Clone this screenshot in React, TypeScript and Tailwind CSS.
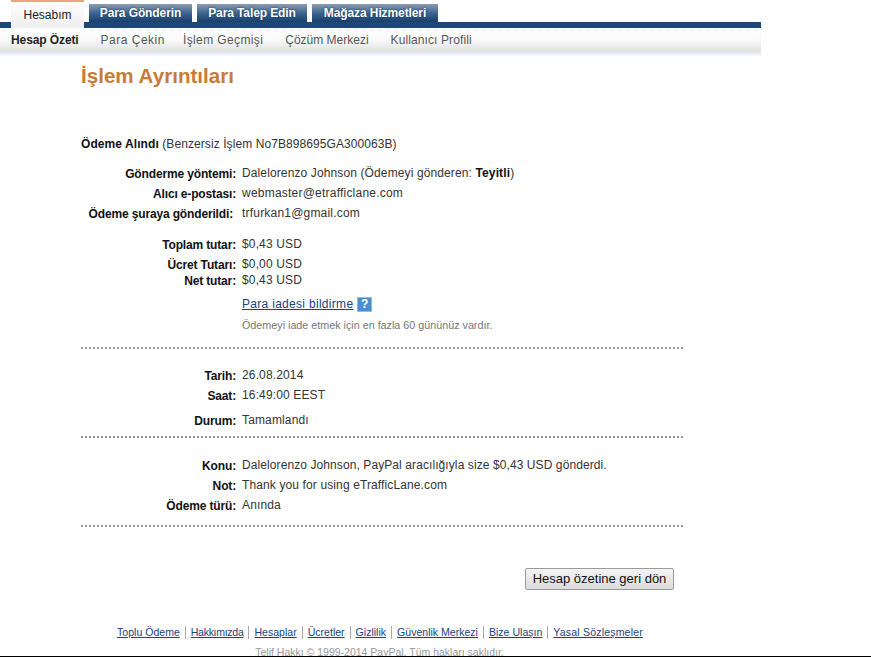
const tabs = [
  { label: "Para Gönderin", width: "w-[103px]" },
  { label: "Para Talep Edin", width: "w-[110px]" },
  { label: "Mağaza Hizmetleri", width: "w-[126px]" },
];

const subNav = [
  { label: "Para Çekin", style: "-mr-[4px] tracking-[0.5px]" },
  { label: "İşlem Geçmişi", style: "tracking-[0.38px]" },
  { label: "Çözüm Merkezi", style: "" },
  { label: "Kullanıcı Profili", style: "tracking-[0.1px]" },
];

const footerLinks = [
  { label: "Toplu Ödeme", style: "" },
  { label: "Hakkımızda", style: "tracking-[-0.3px]" },
  { label: "Hesaplar", style: "" },
  { label: "Ücretler", style: "" },
  { label: "Gizlilik", style: "" },
  { label: "Güvenlik Merkezi", style: "" },
  { label: "Bize Ulaşın", style: "" },
  { label: "Yasal Sözleşmeler", style: "tracking-[0.18px]" },
];

function Row({
  label,
  className,
  labelClass = "",
  valueClass = "tracking-[0.14px]",
  children,
}: {
  label: string;
  className: string;
  labelClass?: string;
  valueClass?: string;
  children: React.ReactNode;
}) {
  return (
    <div className={`flex ${className}`}>
      <div className={`w-[155px] pt-px text-right leading-[14px] font-bold tracking-[-0.15px] text-[#111] ${labelClass}`}>
        {label}
      </div>
      <div className={`ml-[6px] leading-[14px] ${valueClass}`}>{children}</div>
    </div>
  );
}

function Divider({ className }: { className: string }) {
  return <div className={`w-[602px] border-t-2 border-dotted border-[#999] ${className}`} />;
}

export default function App() {
  return (
    <div className="relative h-[657px] w-[871px] overflow-hidden bg-white font-['Liberation_Sans',Arial,sans-serif] text-xs text-[#333]">
      <div className="w-[761px]">
        <div className="relative flex h-[28px] items-end pl-[11px]">
          <div className="absolute inset-x-0 bottom-0 h-[6px] bg-[repeating-conic-gradient(#15406f_0_25%,#24507d_0_50%)] bg-[length:2px_2px]" />
          <div className="relative z-10 flex h-[28px] w-[73px] items-center justify-center border-t-2 border-[#e8a583] bg-gradient-to-b from-white to-[#eeeeee] pb-[1px] text-[#222]">
            Hesabım
          </div>
          <div className="relative z-10 mb-[6px] ml-[5px] flex gap-[5px]">
            {tabs.map((tab) => (
              <div
                key={tab.label}
                className={`flex h-[18px] items-center justify-center bg-gradient-to-b from-[#8c9dae] via-[#3f6690] via-50% to-[#17406f] font-bold tracking-[-0.1px] text-white [text-shadow:0_0_2px_#0b2a4d] ${tab.width}`}
              >
                {tab.label}
              </div>
            ))}
          </div>
        </div>
        <div className="flex h-[24px] items-center gap-[22px] bg-gradient-to-b from-white via-[#fafafa] to-[#dfdfdf] pl-[11px] text-[#555]">
          <span className="font-bold tracking-[-0.1px] text-[#222]">Hesap Özeti</span>
          {subNav.map((item) => (
            <span key={item.label} className={item.style}>
              {item.label}
            </span>
          ))}
        </div>
        <div className="h-[5px] bg-gradient-to-b from-[#dbe5f0] to-white" />
      </div>

      <div className="pl-[81px]">
        <h1 className="mt-[7px] text-[20.6px] leading-[24px] font-bold text-[#c77c36]">İşlem Ayrıntıları</h1>

        <p className="mt-[49px] leading-[14px] tracking-[0.08px]">
          <b className="text-[#111]">Ödeme Alındı</b> (Benzersiz İşlem No7B898695GA300063B)
        </p>

        <Row label="Gönderme yöntemi:" className="mt-[15px]" valueClass="tracking-[0.12px]">
          Dalelorenzo Johnson (Ödemeyi gönderen: <b className="text-[#111]">Teyitli</b>)
        </Row>
        <Row label="Alıcı e-postası:" className="mt-[5px]" valueClass="tracking-[0.22px]">
          webmaster@etrafficlane.com
        </Row>
        <Row label="Ödeme şuraya gönderildi:" className="mt-[5px]" labelClass="pr-[3px]" valueClass="tracking-[0.2px]">
          trfurkan1@gmail.com
        </Row>

        <Row label="Toplam tutar:" className="mt-[16px]">
          $0,43 USD
        </Row>
        <Row label="Ücret Tutarı:" className="mt-[5px]">
          $0,00 USD
        </Row>
        <Row label="Net tutar:" className="mt-px">
          $0,43 USD
        </Row>

        <div className="mt-[8px] ml-[161px] flex items-center gap-[4px] leading-[16px] tracking-[0.3px]">
          <a className="text-[#15447f] underline">Para iadesi bildirme</a>
          <span className="flex h-[15px] w-[15px] items-center justify-center border border-[#8fbce6] bg-[#4a8fcb] text-[12px] font-bold text-white">
            ?
          </span>
        </div>
        <p className="mt-[6px] ml-[161px] text-[10.75px] leading-[14px] text-[#777]">
          Ödemeyi iade etmek için en fazla 60 gününüz vardır.
        </p>

        <Divider className="mt-[15px]" />

        <Row label="Tarih:" className="mt-[19px]">
          26.08.2014
        </Row>
        <Row label="Saat:" className="mt-[5px]">
          16:49:00 EEST
        </Row>
        <Row label="Durum:" className="mt-[10px]">
          Tamamlandı
        </Row>

        <Divider className="mt-[8px]" />

        <Row label="Konu:" className="mt-[20px]" valueClass="tracking-[0.09px]">
          Dalelorenzo Johnson, PayPal aracılığıyla size $0,43 USD gönderdi.
        </Row>
        <Row label="Not:" className="mt-[5px]" valueClass="tracking-[0.12px]">
          Thank you for using eTrafficLane.com
        </Row>
        <Row label="Ödeme türü:" className="mt-[5px]">
          Anında
        </Row>

        <Divider className="mt-[12px]" />

        <div className="mt-[41px] flex w-[593px] justify-end">
          <button className="h-[22px] w-[149px] rounded-[2px] border border-[#999] bg-gradient-to-b from-[#f4f4f4] to-[#dcdcdc] text-[13px] text-[#111]">
            Hesap özetine geri dön
          </button>
        </div>
      </div>

      <div className="mt-[36px] flex w-[760px] justify-center text-[10.55px] leading-[13px]">
        {footerLinks.map((link, i) => (
          <a
            key={link.label}
            className={`text-[#15447f] underline ${link.style} ${i > 0 ? "ml-[5px] border-l border-[#aaa] pl-[5px]" : ""}`}
          >
            {link.label}
          </a>
        ))}
      </div>
      <p className="mt-[7px] w-[759px] text-center text-[10.5px] leading-[13px] text-[#999]">
        Telif Hakkı © 1999-2014 PayPal. Tüm hakları saklıdır.
      </p>
      <div className="absolute inset-x-0 bottom-0 h-px bg-black" />
    </div>
  );
}
